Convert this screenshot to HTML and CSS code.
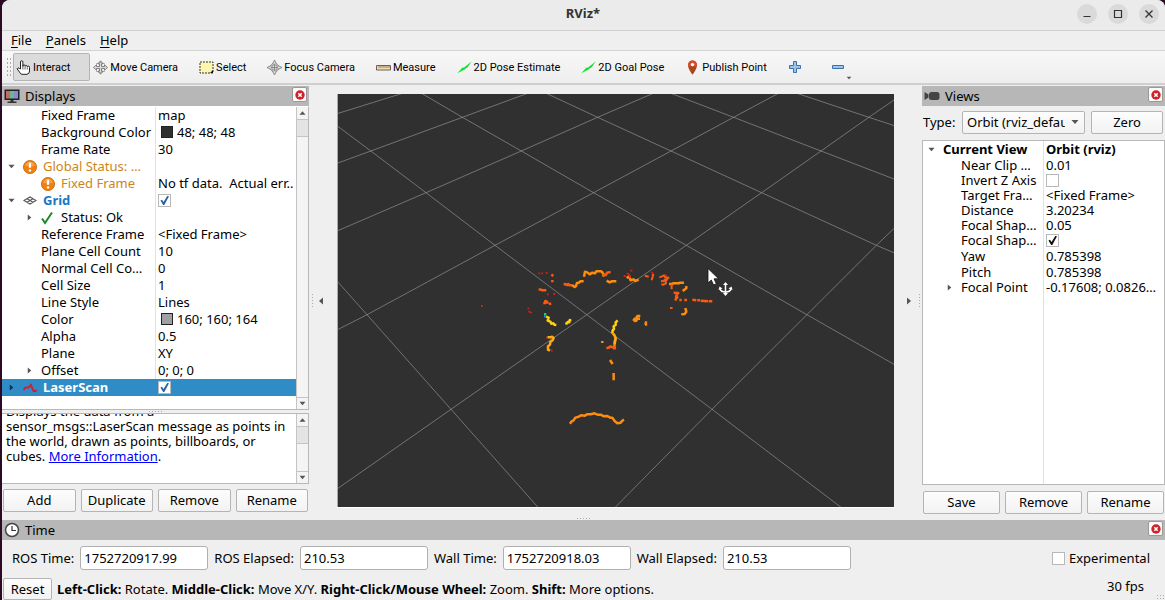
FILE: index.html
```html
<!DOCTYPE html>
<html lang="en">
<head>
<meta charset="utf-8">
<meta name="viewport" content="width=device-width, initial-scale=1">
<title>RViz*</title>
<link rel="stylesheet" href="styles.css">
</head>
<body>
<svg class="defs" aria-hidden="true">
  <symbol id="i-close" viewBox="0 0 10 10"><circle cx="5" cy="5" r="4.7" fill="#d02028"/><path d="M3.3 3.3l3.4 3.4M6.7 3.3L3.3 6.7" stroke="#fff" stroke-width="1.5"/></symbol>
  <symbol id="i-warn" viewBox="0 0 14 14"><circle cx="7" cy="7" r="6.6" fill="#f08010" stroke="#c96808" stroke-width=".8"/><path d="M2 5.5a5.2 5 0 0 1 10 0q-5 2-10 0z" fill="#fff" opacity=".25"/><path d="M7 2.8v5" stroke="#fff" stroke-width="2.2"/><circle cx="7" cy="10.4" r="1.2" fill="#fff"/></symbol>
  <symbol id="i-down" viewBox="0 0 8 6"><path d="M.5 1h7L4 5z" fill="#555"/></symbol>
  <symbol id="i-up" viewBox="0 0 8 6"><path d="M.5 5h7L4 1z" fill="#555"/></symbol>
  <symbol id="i-right" viewBox="0 0 6 8"><path d="M1 .5v7L5 4z" fill="currentColor"/></symbol>
  <symbol id="i-pose" viewBox="0 0 15 15"><path d="M.3 13.300L5.500 7.500l1.300.2L14.600 1.500 10.500 7.500 9 8.200 7.500 9.600z" fill="#12e030"/></symbol>
</svg>
<div class="window">
  <header class="titlebar">
    <h1 class="titlebar-text">RViz*</h1>
    <div class="window-buttons">
      <button class="window-button" aria-label="Minimize"><svg viewBox="0 0 20 20"><path d="M6.500 12.500h7" stroke="#333" stroke-width="1.200"/></svg></button>
      <button class="window-button" aria-label="Maximize"><svg viewBox="0 0 20 20"><path d="M6.500 6.500h7v7h-7z" fill="none" stroke="#333" stroke-width="1.200"/></svg></button>
      <button class="window-button" aria-label="Close"><svg viewBox="0 0 20 20"><path d="M6.500 6.500l7 7m0-7l-7 7" stroke="#333" stroke-width="1.300"/></svg></button>
    </div>
  </header>
  <nav class="menubar">
    <button class="menu"><u>F</u>ile</button>
    <button class="menu"><u>P</u>anels</button>
    <button class="menu"><u>H</u>elp</button>
  </nav>
  <div class="toolbar" role="toolbar" aria-label="Tools">
    <span class="grip"></span>
    <button class="tool tool-active"><svg class="tool-icon" viewBox="0 0 15 15"><path d="M4.500 9V2a1.200 1.200 0 0 1 2.400 0v4.500V5.800a1.100 1.100 0 0 1 2.200.3v.3a1.100 1.100 0 0 1 2.200.3v.4a1.100 1.100 0 0 1 2.200.3V11q0 3-2.500 3.300H6Q4.500 14.300 3.500 12L1 8.800q.8-1.800 2.300-.3z" fill="#fff" stroke="#222" stroke-width="1"/><path d="M6.900 6.500v3M9.100 7v2.500M11.300 7.500v2" stroke="#222" stroke-width=".7"/></svg>Interact</button>
    <button class="tool"><svg class="tool-icon" viewBox="0 0 15 15"><path d="M7.500.8l2.500 3H8.500v2.700h3V4.800l3 2.700-3 2.700V8.500h-3v2.700H10l-2.500 3-2.500-3h1.500V8.500h-3v1.700l-3-2.700 3-2.700v1.700h3V3.800H5z" fill="#ddd" stroke="#666" stroke-width=".8"/><path d="M3 4q4.500-3 9 0M3 11q4.500 3 9 0" fill="none" stroke="#888" stroke-width=".8"/></svg>Move Camera</button>
    <button class="tool"><svg class="tool-icon" viewBox="0 0 15 15"><path d="M1 2h13v11H1z" fill="#fdf6b0" stroke="#333" stroke-dasharray="2 1"/><path d="M14 10v3h-3z" fill="#111"/></svg>Select</button>
    <button class="tool"><svg class="tool-icon" viewBox="0 0 15 15"><circle cx="7.500" cy="7.500" r="4.300" fill="none" stroke="#888" stroke-width="1"/><path d="M7.500 0l1.500 3v3h3l3 1.500L12 9H9v3l-1.500 3L6 12V9H3L0 7.500 3 6h3V3z" fill="#ddd" stroke="#777" stroke-width=".8"/><path d="M4 7.500h7M7.500 4v7" stroke="#777" stroke-width=".8"/></svg>Focus Camera</button>
    <button class="tool"><svg class="tool-icon" viewBox="0 0 15 15"><path d="M.5 5.500h14v4.500H.5z" fill="#f4deb0" stroke="#6a6058"/><path d="M3 6v2M5 6v2M7 6v2M9 6v2M11 6v2M13 6v2" stroke="#776858" stroke-width=".8"/></svg>Measure</button>
    <button class="tool"><svg class="tool-icon"><use href="#i-pose"/></svg>2D Pose Estimate</button>
    <button class="tool"><svg class="tool-icon"><use href="#i-pose"/></svg>2D Goal Pose</button>
    <button class="tool"><svg class="tool-icon" viewBox="0 0 15 15"><path d="M7.500 14.800Q3 8.800 3 5a4.500 4.500 0 0 1 9 0q0 3.800-4.500 9.800z" fill="#a8481a"/><path d="M7.500.5A4.500 4.500 0 0 1 12 5v1.500H3V5A4.500 4.500 0 0 1 7.500.5z" fill="#dd4a32"/><circle cx="7.500" cy="4.600" r="1.700" fill="#fff"/></svg>Publish Point</button>
    <button class="tool tool-edit" aria-label="Add tool"><svg viewBox="0 0 12 12"><path d="M4.500.5h3v4h4v3h-4v4h-3v-4h-4v-3h4z" fill="#9cc4ea" stroke="#3a72b0"/></svg></button>
    <button class="tool tool-edit tool-menu" aria-label="Remove tool"><svg viewBox="0 0 12 12"><path d="M.5 4.500h11v3H.5z" fill="#9cc4ea" stroke="#3a72b0"/></svg><svg class="menu-mark"><use href="#i-down"/></svg></button>
  </div>

  <main class="workspace">
    <section class="dock displays">
      <header class="dock-title">
        <svg class="dock-icon" viewBox="0 0 16 16"><path d="M.5 1.500h15v10.500H.5z" fill="#222"/><path d="M2 3h4v7.500H2z" fill="#c66"/><path d="M6 3h4v7.500H6z" fill="#6b8"/><path d="M10 3h4v7.500h-4z" fill="#88d"/><path d="M6.500 12h3v1.500h3V15h-9v-1.500h3z" fill="#333"/></svg>
        <h2 class="dock-name">Displays</h2>
        <button class="dock-close" aria-label="Close Displays"><svg><use href="#i-close"/></svg></button>
      </header>
      <div class="scrollbox tree-box">
        <table class="tree">
          <colgroup><col class="col-name"><col></colgroup>
          <tbody>
          <tr><td class="lv-prop">Fixed Frame</td><td>map</td></tr>
          <tr><td class="lv-prop">Background Color</td><td><span class="swatch swatch-dark"></span>48; 48; 48</td></tr>
          <tr><td class="lv-prop">Frame Rate</td><td>30</td></tr>
          <tr class="warn"><td><span class="cell"><svg class="twist"><use href="#i-down"/></svg><svg class="row-icon"><use href="#i-warn"/></svg>Global Status: …</span></td><td></td></tr>
          <tr class="warn"><td class="lv-prop"><span class="cell"><svg class="row-icon"><use href="#i-warn"/></svg>Fixed Frame</span></td><td class="value">No tf data.&nbsp; Actual err..</td></tr>
          <tr class="grid-row"><td><span class="cell"><svg class="twist"><use href="#i-down"/></svg><svg class="row-icon" viewBox="0 0 14 14"><path d="M1 6.500L7 3l6 3.500L7 10zM4 4.800l6 3.500M10 4.800L4 8.300" fill="none" stroke="#555" stroke-width="1.100"/></svg>Grid</span></td><td><input class="check" type="checkbox" aria-label="Grid" checked></td></tr>
          <tr><td><span class="cell lv-sub"><svg class="twist"><use href="#i-right"/></svg><svg class="row-icon" viewBox="0 0 14 14"><path d="M2 7.500l3 4.500L12 1.500" fill="none" stroke="#1e8a28" stroke-width="2"/></svg>Status: Ok</span></td><td></td></tr>
          <tr><td class="lv-prop">Reference Frame</td><td>&lt;Fixed Frame&gt;</td></tr>
          <tr><td class="lv-prop">Plane Cell Count</td><td>10</td></tr>
          <tr><td class="lv-prop">Normal Cell Co…</td><td>0</td></tr>
          <tr><td class="lv-prop">Cell Size</td><td>1</td></tr>
          <tr><td class="lv-prop">Line Style</td><td>Lines</td></tr>
          <tr><td class="lv-prop">Color</td><td><span class="swatch swatch-grey"></span>160; 160; 164</td></tr>
          <tr><td class="lv-prop">Alpha</td><td>0.5</td></tr>
          <tr><td class="lv-prop">Plane</td><td>XY</td></tr>
          <tr><td><span class="cell lv-sub"><svg class="twist"><use href="#i-right"/></svg>Offset</span></td><td>0; 0; 0</td></tr>
          <tr class="selected"><td><span class="cell"><svg class="twist"><use href="#i-right"/></svg><svg class="row-icon" viewBox="0 0 14 14"><path d="M.5 9l2-2.500h3L8 4l2.500 6h2l1-1" fill="none" stroke="#d0202c" stroke-width="1.900"/></svg>LaserScan</span></td><td><input class="check" type="checkbox" aria-label="LaserScan" checked></td></tr>
          </tbody>
        </table>
        <div class="scrollbar"><svg><use href="#i-up"/></svg><span class="thumb"></span><svg class="bar-end"><use href="#i-down"/></svg></div>
      </div>
      <span class="dots dots-h"></span>
      <div class="scrollbox help-box">
        <p class="help">Displays the data from a<br>sensor_msgs::LaserScan message as points in<br>the world, drawn as points, billboards, or<br>cubes. <a href="#more">More Information</a>.</p>
        <div class="scrollbar"><svg><use href="#i-up"/></svg><span class="thumb"></span><svg class="bar-end"><use href="#i-down"/></svg></div>
      </div>
      <div class="button-row">
        <button class="btn">Add</button><button class="btn">Duplicate</button><button class="btn">Remove</button><button class="btn">Rename</button>
      </div>
    </section>

    <div class="splitter"><span class="dots dots-v"></span><button class="collapse flip" aria-label="Hide left dock"><svg><use href="#i-right"/></svg></button></div>

    <div class="view-column">
    <svg class="view" viewBox="337 94 557 413" preserveAspectRatio="xMidYMid slice" role="img" aria-label="3D view of the laser scan">
      <g fill="none" stroke="#a0a0a4" stroke-opacity=".6" stroke-width="1">
        <path d="M421 93l41.400 24.300L521.300 151l72.300 41.700 92.700 52.600 120.600 69.400 87.100 49.600"/>
        <path d="M337 125.700l33.800 25.300 55.200 41.700 69 52.600 91.800 69.400L712 409.300l129 98"/>
        <path d="M337 281l30 33.700 84 94.600 87 98"/>
        <path d="M545.500 93l52.100 24.300L671 151l90.600 41.700 114.800 52.600 18 7.700"/>
        <path d="M670 93l63.600 24.300L821 151l73 28"/>
        <path d="M796 93l72.800 24.300 25.200 8.200"/>
        <path d="M403.500 93L337 113.700"/>
        <path d="M528.500 93l-66.100 24.300L370.800 151 337 163.300"/>
        <path d="M654 93l-56.400 24.300L521.300 151 426 192.700 337 231"/>
        <path d="M779 93l-45.400 24.300L671 151l-77.400 41.700-98.600 52.600-128 69.400-30 15.300"/>
        <path d="M894 100l-25.200 17.300L821 151l-59.400 41.700-75.300 52.600-99.500 69.400L451 409.300 337 489"/>
        <path d="M894 228.500l-17.600 16.800-69.500 69.400-94.900 94.600L615 507.500"/>
      </g>
      <path d="M337.500 94v413" stroke="#aaa" stroke-width="1"/>
      <g transform="translate(460 250) scale(.3333)" fill="none" stroke-width="7.500" stroke-linejoin="round">
        <g stroke="#ff8c0a">
          <path d="M330 521l5-7 5-2 6-9 8-2 9-5 12 1 6-4h12l10-3 10 4h9l10 5 10-1 9 5h6l7 10 8 7 10-2 4-5 6-4"/>
          <path d="M372 80l3-15 7 2 7 6 8-5 8 2 4-6h14l4 3 4 7-1 6"/>
          <path d="M440 92l9 5 6-3h14M336 105l8 6 4-3 3-9 6-1 4-4h10"/>
          <path d="M467 262l-3 14-1 22M450 330l8 12M461 369v22"/>
          <path d="M520 213l4-7h4l4-8h9M521 213l8-1 3-6h8M559 214l-2 6 2 7M427 273v6"/>
          <path d="M676 174l3 11-5 7-10 1M668 123l11-8v-7M627 102h10l2-2h18l2-2h13"/>
          <path d="M500 84l8-5 4 12 8-3 6 5 10-4"/>
        </g>
        <g stroke="#ffd10c">
          <path d="M258 200l8 3-3 9 8 3 3 6 6-1 3 4 6 1M316 221l5-1 2-4 5 1 1-6 5-1M473 211l-6 6v8l-6 4 1 8-4 4-1 9"/>
        </g>
        <g stroke="#ffaa12">
          <path d="M458 250l5 5 4 10-3 17M262 262h10l4-2 5 4-3 7-7 5-1 8-6 5v10l6 3"/>
        </g>
        <g stroke="#fb5a10">
          <path d="M312 105l3-3 7 3 3-3 4 4h7M428 79l4-5 6 1 3-7 11-2M439 294l7-1 6-4 5 3 6-1 3 6"/>
          <path d="M236 118l7 1 3 2h13M250 160l5-1 1-6 5 2 2 6M268 158l4 7M274 74l6 4M277 90v7"/>
          <path d="M555 77l11 3M580 71l-2 9-3 11M598 82l8-3 6-3 4 6 12 1M603 93l8 1 3-5 8-2-5 7 1 6-8 4-6-1M635 102v16" stroke-width="6"/>
          <path d="M641 128l14 1-5 6v6l5 3M648 136l1 7-3 9M658 150h7M673 150h8M697 149l12 2M712 151h8M722 152l22 2M746 154h11"/>
          <path d="M634 171v6"/>
        </g>
        <g stroke="#dc2014" stroke-width="5.500">
          <path d="M235 70h5M244 70h5M260 66v5M261 133h5M280 132h5M63 168h5M205 173v5M205 185h5M213 185v5M273 302h5M258 263h5M491 78h6M500 71h6M511 62h6M506 73l6 10M574 68h6M615 76h6"/>
        </g>
        <path d="M252 193h7" stroke="#18dc68"/><path d="M252 200h5" stroke="#2f8cff" stroke-width="4"/>
      </g>
      <path d="M708 268.500v14.500l3.300-3 2.300 5 2.700-1.200-2.300-5h4.600z" fill="#fff" stroke="#111" stroke-width=".8"/>
      <g fill="none" stroke="#fff" stroke-width="1.500"><path d="M725.500 285v9"/><path d="M720 289q1 3 5.500 3t5.500-3"/></g>
      <path d="M725.500 282l2.500 3h-5zM725.500 296l-2.500-3h5zM718.500 290l1-3.500 3 2zM732.500 290l-1-3.500-3 2z" fill="#fff"/>
    </svg>
    </div>

    <div class="splitter splitter-right"><button class="collapse" aria-label="Hide right dock"><svg><use href="#i-right"/></svg></button><span class="dots dots-v"></span></div>

    <section class="dock views">
      <header class="dock-title">
        <svg class="dock-icon" viewBox="0 0 16 16"><path d="M.5 4l4 2.500v3l-4 2.500z" fill="#444"/><rect x="5" y="4" width="10.500" height="8" rx="2.500" fill="#444"/></svg>
        <h2 class="dock-name">Views</h2>
        <button class="dock-close" aria-label="Close Views"><svg><use href="#i-close"/></svg></button>
      </header>
      <div class="type-row">
        <label for="view-type">Type:</label>
        <span class="select-wrap"><select id="view-type" class="select"><option>Orbit (rviz_default_plugins)</option></select><svg><use href="#i-down"/></svg></span>
        <button class="btn">Zero</button>
      </div>
      <div class="scrollbox view-tree-box">
        <table class="tree view-tree">
          <colgroup><col class="col-view"><col></colgroup>
          <tbody>
          <tr class="current"><td><span class="cell"><svg class="twist"><use href="#i-down"/></svg>Current View</span></td><td>Orbit (rviz)</td></tr>
          <tr><td class="lv-prop">Near Clip …</td><td>0.01</td></tr>
          <tr><td class="lv-prop">Invert Z Axis</td><td><input class="check check-black" type="checkbox" aria-label="Invert Z Axis"></td></tr>
          <tr><td class="lv-prop">Target Fra…</td><td>&lt;Fixed Frame&gt;</td></tr>
          <tr><td class="lv-prop">Distance</td><td>3.20234</td></tr>
          <tr><td class="lv-prop">Focal Shap…</td><td>0.05</td></tr>
          <tr><td class="lv-prop">Focal Shap…</td><td><input class="check check-black" type="checkbox" aria-label="Focal Shape Fixed Size" checked></td></tr>
          <tr class="tall"><td class="lv-prop">Yaw</td><td>0.785398</td></tr>
          <tr><td class="lv-prop">Pitch</td><td>0.785398</td></tr>
          <tr><td><span class="cell lv-sub"><svg class="twist"><use href="#i-right"/></svg>Focal Point</span></td><td>-0.17608; 0.0826…</td></tr>
          </tbody>
        </table>
      </div>
      <div class="button-row">
        <button class="btn">Save</button><button class="btn">Remove</button><button class="btn">Rename</button>
      </div>
    </section>
  </main>

  <div class="time-split"><span class="dots dots-h"></span></div>
  <section class="time">
    <header class="dock-title">
      <svg class="dock-icon" viewBox="0 0 16 16"><circle cx="8" cy="8" r="6.500" fill="#fff" stroke="#444" stroke-width="1.500"/><path d="M8 4v4.500h4" fill="none" stroke="#333" stroke-width="1.200"/></svg>
      <h2 class="dock-name">Time</h2>
      <button class="dock-close" aria-label="Close Time"><svg><use href="#i-close"/></svg></button>
    </header>
    <div class="time-row">
      <label for="ros-time">ROS Time:</label><input class="field" id="ros-time" value="1752720917.99">
      <label for="ros-elapsed">ROS Elapsed:</label><input class="field" id="ros-elapsed" value="210.53">
      <label for="wall-time">Wall Time:</label><input class="field" id="wall-time" value="1752720918.03">
      <label for="wall-elapsed">Wall Elapsed:</label><input class="field" id="wall-elapsed" value="210.53">
      <label class="experimental"><input class="check" type="checkbox">Experimental</label>
    </div>
  </section>
  <footer class="status">
    <button class="btn reset">Reset</button>
    <p class="hint"><b>Left-Click:</b> Rotate. <b>Middle-Click:</b> Move X/Y. <b>Right-Click/Mouse Wheel:</b> Zoom. <b>Shift:</b> More options.</p>
    <span class="fps">30 fps</span>
    <span class="dots size-grip"></span>
  </footer>
</div>
</body>
</html>
```

FILE: styles.css
```css
* { box-sizing: border-box; }
body { margin: 0; background: #2c0a24; color: #000; font: 13px/17px "Noto Sans", "Open Sans", sans-serif; }
button, input, select { font: inherit; color: inherit; margin: 0; }
h1, h2, p { margin: 0; font-size: inherit; }
svg { display: block; flex: none; }
.defs { position: absolute; width: 0; height: 0; }

.window { display: flex; flex-direction: column; height: 100vh; min-height: 600px; margin-left: 2px; background: #efefef; border-radius: 8px 8px 0 0; overflow: hidden; }

.titlebar { display: grid; grid-template-columns: 1fr auto 1fr; align-items: center; height: 31px; padding: 0 6px 3px 5px; background: #ebebeb; border-bottom: 1px solid #cfcfcf; }
.titlebar-text { grid-column: 2; font-size: 13px; font-weight: 700; color: #333; }
.window-buttons { display: flex; justify-content: flex-end; gap: 11px; }
.window-button { width: 20px; height: 20px; padding: 0; border: 0; border-radius: 50%; background: #dadada; }

.menubar { display: flex; gap: 14px; height: 20px; padding-left: 9px; border-bottom: 1px solid #d4d4d4; }
.menu { padding: 0; border: 0; background: none; line-height: 17px; }
.menu u { text-underline-offset: 2px; }

.toolbar { display: flex; align-items: center; height: 34px; background: linear-gradient(#f7f7f7, #eee); border-bottom: 2px solid #cfcfcf; font-family: Roboto, "Noto Sans", sans-serif; font-size: 11px; }
.grip { width: 5px; height: 20px; margin: 0 2px 0 4px; background: radial-gradient(circle, #aaa 1px, transparent 1px) 0 0 / 3px 4px; }
.tool { display: flex; align-items: center; gap: 2px; height: 28px; padding: 0 17px 0 2px; border: 1px solid transparent; border-radius: 2px; background: none; white-space: nowrap; }
.tool-active { padding-right: 19px; background: #dbdbdb; border-color: #b4b4b4; }
.tool-icon { width: 15px; height: 15px; }
.tool-edit { width: 43px; padding: 0 0 0 3px; }
.tool-edit svg { width: 12px; height: 12px; }
.tool-edit .menu-mark { width: 6px; height: 4px; align-self: flex-end; }

.workspace { display: flex; flex: 1; min-height: 0; padding-top: 1px; }
.dock { display: flex; flex-direction: column; flex: none; min-height: 0; }
.displays { width: 307px; padding-bottom: 4px; }
.views { width: 243px; padding-bottom: 2px; }
.dock-title { display: flex; align-items: center; flex: none; height: 20px; padding: 0 2px; background: #b7b7b7; }
.dock-icon { width: 16px; height: 16px; }
.dock-name { margin-left: 5px; font-weight: 400; }
.dock-close { display: grid; place-items: center; width: 15px; height: 15px; margin: 0 0 3px auto; padding: 0; border: 1px solid #999; border-radius: 2px; background: #fafafa; }
.dock-close svg { width: 10px; height: 10px; }

.scrollbox { display: flex; background: #fff; border: 1px solid #b8b8b8; border-left: 0; overflow: hidden; }
.tree-box { flex: 1; min-height: 0; border-top-color: #fff; }
.tree { flex: 1; min-width: 0; align-self: flex-start; table-layout: fixed; border-collapse: collapse; }
.tree-box .tree { background: linear-gradient(#e2e2e2, #e2e2e2) 153px 0 / 1px 100% no-repeat; }
.col-name { width: 153px; }
.col-view { width: 120px; }
.tree td { height: 17px; padding: 0; line-height: 17px; white-space: nowrap; overflow: hidden; }
.tree td + td { padding-left: 3px; }
.tree .lv-prop { padding-left: 39px; }
.cell { display: flex; align-items: center; gap: 6px; padding-left: 6px; }
.lv-prop .cell { padding-left: 0; }
.cell.lv-sub { padding-left: 24px; }
.twist { width: 7px; height: 7px; margin-right: 2px; color: #555; }
.cell.lv-sub .row-icon { margin: 0 1px 0 -1px; }
.row-icon { width: 14px; height: 14px; }
.warn td:first-child { color: #cd8518; }
.grid-row td:first-child { color: #1b75c5; font-weight: 700; }
.selected { background: #308cc6; color: #fff; font-weight: 700; }
.selected .twist { color: #0d2f50; }
.swatch { display: inline-block; width: 12px; height: 12px; margin: 0 4px 0 3px; border: 1px solid #222; vertical-align: -1px; }
.swatch-dark { background: #303030; }
.swatch-grey { background: #a0a0a4; }

.check { display: grid; place-items: center; appearance: none; width: 13px; height: 13px; border: 1px solid #b8b8b8; background: #fff; flex: none; }
.check:checked::after { content: ""; width: 9px; height: 9px; background: #2464a4; clip-path: polygon(5% 50%, 22% 42%, 40% 68%, 80% 0, 100% 4%, 48% 100%, 35% 100%); }
.check-black:checked::after { background: #111; }

.scrollbar { display: flex; flex-direction: column; flex: none; width: 12px; border-left: 1px solid #c4c4c4; background: #f4f4f4; }
.scrollbar svg { width: 100%; height: 12px; padding: 3px 2px; }
.scrollbar .bar-end { margin-top: auto; border-top: 1px solid #c4c4c4; }
.thumb { height: 18px; border: solid #c4c4c4; border-width: 1px 0; background: #e4e4e4; }

.dots { flex: none; background: radial-gradient(circle, #aaa 1px, transparent 1px) 0 0 / 3px 3px; }
.dots-h { align-self: center; width: 15px; height: 3px; }
.dots-v { width: 3px; height: 16px; }

.help-box { flex: none; height: 71px; }
.help { align-self: flex-end; flex: 1; padding: 0 0 19px 4px; line-height: 15px; white-space: nowrap; }
.help a { color: #00f; }
.button-row { display: flex; gap: 5px; flex: none; padding: 5px 1px 0; }
.button-row .btn { flex: 1; }
.btn { height: 23px; padding: 0; border: 1px solid #b4b4b4; border-radius: 2px; background: linear-gradient(#fdfdfd, #f2f2f2); line-height: 19px; text-align: center; }

.splitter { display: flex; align-items: center; gap: 4px; width: 28px; padding: 0 2px; }
.splitter-right { justify-content: flex-end; gap: 6px; padding: 0 1px; }
.collapse { padding: 0; border: 0; background: none; color: #555; }
.collapse svg { width: 6px; height: 8px; }
.flip { transform: scaleX(-1); }
.view-column { display: flex; flex: 1; min-width: 0; padding: 8px 0; }
.view { flex: 1; min-width: 0; width: 100%; height: 100%; background: #303030; border-bottom: 1px solid #fff; }

.type-row { display: flex; align-items: center; gap: 6px; padding: 5px 2px 6px 1px; }
.type-row label { width: 33px; white-space: nowrap; }
.type-row .btn { width: 72px; }
.select-wrap { position: relative; flex: 1; min-width: 0; }
.select { display: block; appearance: none; width: 100%; height: 23px; padding: 0 19px 0 4px; border: 1px solid #b4b4b4; border-radius: 2px; background: linear-gradient(#fdfdfd, #f2f2f2); text-overflow: clip; }
.select-wrap svg { position: absolute; right: 6px; top: 8px; width: 8px; height: 6px; pointer-events: none; }
.view-tree-box { flex: 1; min-height: 0; border-left: 1px solid #b8b8b8; background: linear-gradient(#e2e2e2, #e2e2e2) 120px 0 / 1px 100% no-repeat #fff; }
.view-tree .lv-prop { padding-left: 38px; }
.view-tree .cell { padding-left: 5px; }
.view-tree .cell.lv-sub { padding-left: 23px; }
.view-tree td { height: 15px; line-height: 15px; }
.view-tree .current td, .view-tree .tall td { height: 17px; line-height: 17px; }
.current { font-weight: 700; }
.views .button-row { padding: 6px 1px 0; }

.time-split { display: flex; justify-content: center; height: 4px; flex: none; }
.time-row { display: flex; align-items: center; gap: 6px; height: 36px; padding: 0 15px 0 10px; white-space: nowrap; }
.field { width: 128px; min-width: 0; height: 24px; padding: 0 3px; border: 1px solid #b0b0b0; border-radius: 3px; background: #fff; }
.experimental { display: flex; align-items: center; gap: 4px; margin-left: auto; }
.status { display: flex; align-items: center; flex: none; height: 24px; padding: 2px 0 0 1px; }
.reset { width: 49px; height: 22px; flex: none; }
.hint { margin-left: 5px; white-space: nowrap; }
.fps { margin: 0 12px 6px auto; }
.size-grip { width: 9px; height: 6px; align-self: flex-end; }
```
